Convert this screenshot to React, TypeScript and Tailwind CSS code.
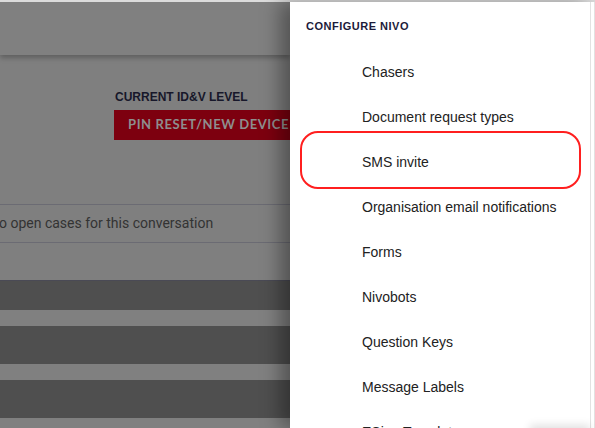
import React from "react";

const items = [
  "Chasers",
  "Document request types",
  "SMS invite",
  "Organisation email notifications",
  "Forms",
  "Nivobots",
  "Question Keys",
  "Message Labels",
  "ESign Templates",
];

export default function App() {
  return (
    <div className="w-[595px] h-[428px] overflow-hidden bg-white flex flex-col font-['Liberation_Sans',Arial,sans-serif]">
      {/* top hairline */}
      <div className="h-[2px] bg-[#dcdcdc] shrink-0" />

      <div className="flex flex-1 min-h-0">
        {/* Dimmed page behind the drawer */}
        <div className="w-[290px] shrink-0 bg-[#7f7f7f] overflow-hidden flex flex-col">
          <div className="h-[53px] bg-[#808080] shadow-[0_3px_5px_rgba(0,0,0,0.25)] shrink-0" />

          <div className="pl-[115px] pt-[35px] shrink-0">
            <div className="h-[14px] flex items-center text-[12px] font-bold text-[#17172a] whitespace-nowrap">
              CURRENT ID&amp;V LEVEL
            </div>
            <div className="mt-[6px] -ml-px h-[30px] w-[220px] bg-[#7d000f] flex items-center pl-[14px] text-[13px] font-bold tracking-[0.6px] text-[#8e8e8e] whitespace-nowrap font-['Lato',sans-serif]">
              PIN RESET/NEW DEVICE
            </div>
          </div>

          <div className="mt-[64px] h-[39px] shrink-0 border-y border-[#6b6b73] flex items-center">
            <span className="-ml-[11px] text-[14px] text-[#333] whitespace-nowrap font-['Roboto',sans-serif]">
              No open cases for this conversation
            </span>
          </div>

          <div className="mt-[37px] flex flex-col shrink-0">
            <div className="h-[30px] bg-[#4f4f4f] border-t border-[#4a4a55]" />
            <div className="h-[16px] bg-[#808080]" />
            <div className="h-[38px] bg-[#4f4f4f]" />
            <div className="h-[16px] bg-[#808080]" />
            <div className="h-[38px] bg-[#4f4f4f]" />
            <div className="h-[16px] bg-[#808080]" />
          </div>
        </div>

        {/* Drawer */}
        <aside className="relative flex-1 bg-white flex shadow-[-10px_0_18px_rgba(0,0,0,0.35)] z-10">
          <div className="relative flex-1 flex flex-col">
            <div className="h-[48px] flex items-center pl-[16px] text-[11px] font-bold text-[#1c1b3a] tracking-[0.5px] shrink-0">
              CONFIGURE NIVO
            </div>
            {items.map((label) => (
              <div
                key={label}
                className="h-[45px] shrink-0 flex items-center pl-[72px] text-[14px] text-[#222] whitespace-nowrap"
              >
                {label}
              </div>
            ))}

            {/* annotation highlight */}
            <div className="absolute left-[10px] top-[129px] w-[281px] h-[58px] rounded-[18px] border-[2.5px] border-[#ff1f1f]" />

            {/* small popup shadow bottom right */}
            <div className="absolute right-0 bottom-[-20px] w-[60px] h-[20px] shadow-[0_-3px_8px_rgba(0,0,0,0.12)]" />
          </div>
          <div className="w-[5px] shrink-0 border-l border-r border-[#e2e2e2] bg-white" />
        </aside>
      </div>
    </div>
  );
}
